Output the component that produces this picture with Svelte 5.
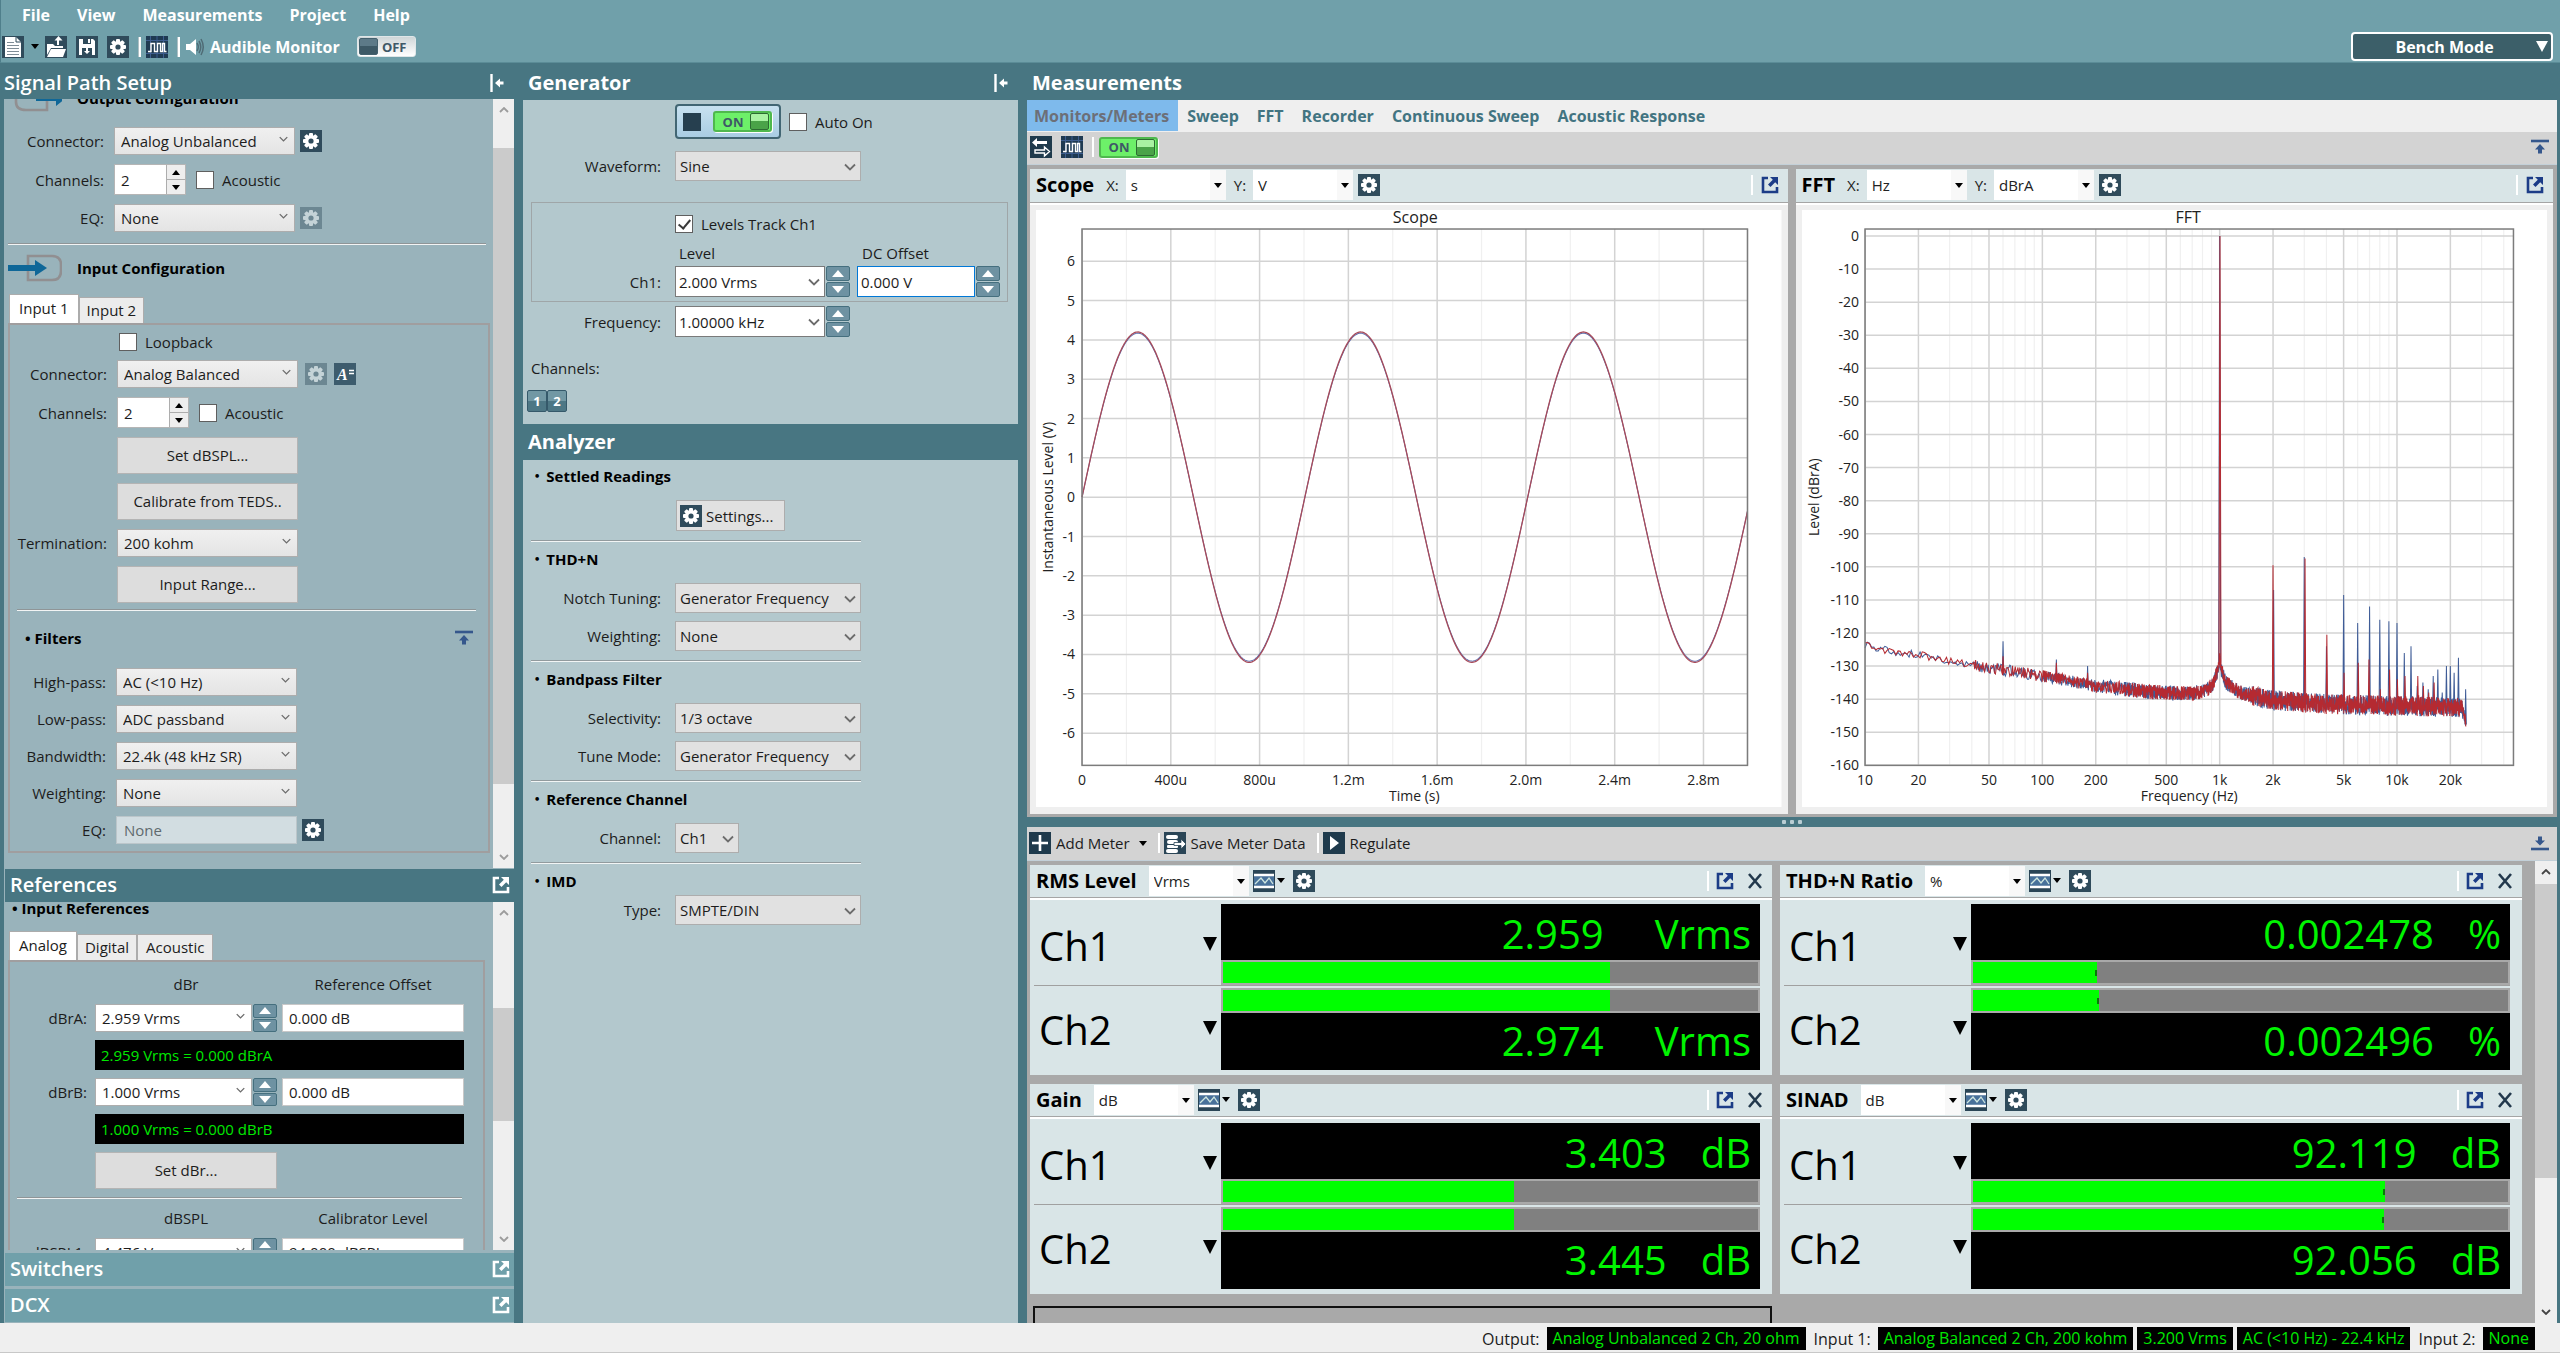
<script>
  const menus = ['File', 'View', 'Measurements', 'Project', 'Help'];
  const tabs = ['Monitors/Meters', 'Sweep', 'FFT', 'Recorder', 'Continuous Sweep', 'Acoustic Response'];

  const meters = [
    { name: 'RMS Level', unit: 'Vrms', ch1: '2.959', ch2: '2.974', bar1: 72.3, bar2: 72.3, mark: false },
    { name: 'THD+N Ratio', unit: '%', ch1: '0.002478', ch2: '0.002496', bar1: 23.2, bar2: 23.5, mark: true },
    { name: 'Gain', unit: 'dB', ch1: '3.403', ch2: '3.445', bar1: 54.3, bar2: 54.3, mark: false },
    { name: 'SINAD', unit: 'dB', ch1: '92.119', ch2: '92.056', bar1: 77, bar2: 76.8, mark: true }
  ];

  const filters = [
    ['High-pass:', 'AC (<10 Hz)'],
    ['Low-pass:', 'ADC passband'],
    ['Bandwidth:', '22.4k (48 kHz SR)'],
    ['Weighting:', 'None']
  ];

  const analyzer = [
    { title: 'THD+N', rows: [['Notch Tuning:', 'Generator Frequency'], ['Weighting:', 'None']] },
    { title: 'Bandpass Filter', rows: [['Selectivity:', '1/3 octave'], ['Tune Mode:', 'Generator Frequency']] },
    { title: 'Reference Channel', rows: [['Channel:', 'Ch1']], small: true },
    { title: 'IMD', rows: [['Type:', 'SMPTE/DIN']], tight: true }
  ];

  const status = [
    ['Output:', ['Analog Unbalanced 2 Ch, 20 ohm']],
    ['Input 1:', ['Analog Balanced 2 Ch, 200 kohm', '3.200 Vrms', 'AC (<10 Hz) - 22.4 kHz']],
    ['Input 2:', ['None']]
  ];

  // Scope plot geometry
  const S = { l: 46, r: 711, t: 19, b: 555, mid: 287, unit: 39.3, ms: 221.8 };
  const scopeX = ['0', '400u', '800u', '1.2m', '1.6m', '2.0m', '2.4m', '2.8m'];
  const scopeY = [6, 5, 4, 3, 2, 1, 0, -1, -2, -3, -4, -5, -6];
  const sine = (amp) => {
    let d = '';
    for (let x = 0; x <= 665; x += 1) {
      const y = S.mid - amp * S.unit * Math.sin((2 * Math.PI * x) / (S.ms * 1.004));
      d += (x ? 'L' : 'M') + (S.l + x) + ' ' + y.toFixed(1);
    }
    return d;
  };

  // FFT plot geometry
  const F = { l: 63, r: 711, t: 19, b: 555, zero: 26, db: 3.306, dec: 177.2 };
  const fx = (f) => F.l + F.dec * Math.log10(f / 10);
  const fy = (v) => F.zero - v * F.db;
  const fftX = [[10, '10'], [20, '20'], [50, '50'], [100, '100'], [200, '200'], [500, '500'], [1000, '1k'], [2000, '2k'], [5000, '5k'], [10000, '10k'], [20000, '20k']];
  const major = fftX.map((t) => t[0]);
  const minor = [];
  for (let d = 10; d <= 10000; d *= 10) for (let k = 2; k < 10; k++) if (!major.includes(k * d) && k * d < 45000) minor.push(k * d);

  const floorPts = [[10, -123.5], [15, -126], [20, -126.5], [30, -128.5], [50, -130.5], [100, -133], [200, -136], [400, -137.8], [700, -138.3], [850, -137.3], [930, -135], [980, -131], [1000, -128], [1020, -131], [1080, -135], [1300, -138], [2000, -140.3], [4000, -141.5], [22800, -142.5], [23300, -142.5], [24500, -147]];
  const floor = (f) => {
    for (let i = 1; i < floorPts.length; i++) {
      const [f1, v1] = floorPts[i];
      const [f0, v0] = floorPts[i - 1];
      if (f <= f1) return v0 + ((v1 - v0) * Math.log(f / f0)) / Math.log(f1 / f0);
    }
    return -147;
  };
  function noise(seed) {
    let s = seed;
    const rnd = () => ((s = (s * 16807) % 2147483647) / 2147483647) * 2 - 1;
    let d = '';
    let x = F.l;
    while (x < F.l + 600.5) {
      const f = 10 * Math.pow(10, (x - F.l) / F.dec);
      const amp = f < 40 ? 1.1 : f < 200 ? 1.8 : f < 1500 ? 2.2 : f < 23500 ? 3 : 1.5;
      d += (d ? 'L' : 'M') + x.toFixed(2) + ' ' + fy(floor(f) + rnd() * amp).toFixed(1);
      x += f < 40 ? 2.2 : f < 100 ? 0.9 : f < 300 ? 0.4 : 0.22;
    }
    return d;
  }
  const blueSpikes = [[60, -122.5], [120, -128], [180, -130], [1000, 0], [2015, -107], [3000, -97], [4000, -124], [5000, -108.5], [6000, -117], [7000, -112], [8000, -116], [9000, -116.5], [10000, -117], [11000, -126], [12000, -124], [13000, -136], [14000, -135], [15000, -137], [16000, -133], [17000, -131], [18000, -138], [19000, -130], [20000, -130], [21000, -132], [22200, -127.5], [24400, -137]];
  const redSpikes = [[60, -127], [120, -129], [180, -132], [1004, 0], [2000, -99.5], [3030, -97.5], [4020, -120.5], [5030, -132], [6050, -129], [6950, -128], [8050, -137], [9080, -131], [10050, -134], [11100, -133], [13100, -133], [14100, -136], [15100, -138], [16200, -135]];
  const spikes = (list) =>
    list.map(([f, v]) => {
      const x = fx(f);
      const w = f > 900 && f < 1100 ? 1 : 0.7;
      const base = fy(floor(f) - 1);
      return `M${(x - w).toFixed(1)} ${base.toFixed(1)}L${x.toFixed(1)} ${fy(v).toFixed(1)}L${(x + w).toFixed(1)} ${base.toFixed(1)}`;
    }).join('');
  const blueTrace = noise(4211) + spikes(blueSpikes);
  const redTrace = noise(90817) + spikes(redSpikes);
</script>

{#snippet gearIcon()}
  <svg class="ico" viewBox="0 0 22 22" aria-hidden="true">
    <rect width="22" height="22" fill="#2f4b5b" />
    <g fill="#fff">
      {#each [0, 45, 90, 135] as a}
        <rect x="9" y="3" width="4" height="16" rx="1" transform="rotate({a} 11 11)" />
      {/each}
      <circle cx="11" cy="11" r="6" />
    </g>
    <circle cx="11" cy="11" r="2.6" fill="#2f4b5b" />
  </svg>
{/snippet}

{#snippet waveIcon()}
  <svg class="ico" viewBox="0 0 22 22" aria-hidden="true">
    <rect width="22" height="22" fill="#1f3a52" />
    <path d="M0 4.5H22M0 17.500H22M4.500 0V22M17.500 0V22M11 0V22" stroke="#3d5d8f" />
    <path d="M2 15.500H5V7.500H8.500V15.500H11.500V7.500H14.500V15.500H16.500V7.500H18.500V15.500H20.500" fill="none" stroke="#fff" stroke-width="1.4" />
  </svg>
{/snippet}

{#snippet popIcon()}
  <svg class="pop" viewBox="0 0 18 18" aria-hidden="true">
    <path d="M7 2H2V16H16V11" fill="none" stroke="currentColor" stroke-width="2.600" />
    <path d="M9 1H17V9L14.200 6.200L9.500 11L7 8.500L11.800 3.800Z" fill="currentColor" />
  </svg>
{/snippet}

{#snippet collapseIcon()}
  <svg class="collapse" viewBox="0 0 14 18" aria-hidden="true">
    <path d="M1.500 0V18" stroke="#fff" stroke-width="2.400" />
    <path d="M5 9L10 4.500V7.500H13.500V10.500H10V13.500Z" fill="#fff" />
  </svg>
{/snippet}

{#snippet foldIcon(down)}
  <svg class="fold" viewBox="0 0 20 16" aria-hidden="true">
    {#if down}
      <path d="M1 14H19" stroke="#35578c" stroke-width="2.600" />
      <path d="M10 10.500L5 5.500H8V1.500H12V5.500H15Z" fill="#35578c" />
    {:else}
      <path d="M1 2H19" stroke="#35578c" stroke-width="2.600" />
      <path d="M10 5L15 10.500H12V14.500H8V10.500H5Z" fill="#35578c" />
    {/if}
  </svg>
{/snippet}

{#snippet graphIcon()}
  <svg class="ico" viewBox="0 0 22 22" aria-hidden="true">
    <rect width="22" height="22" fill="#2a4556" />
    <rect x="1" y="6" width="20" height="10" fill="#48719a" />
    <path d="M1 5H21M1 17H21" stroke="#fff" stroke-width="2.600" />
    <path d="M2 14L8 8L12 13L16 8L20 14" fill="none" stroke="#cfe6e0" stroke-width="1.300" />
  </svg>
{/snippet}

{#snippet caret()}
  <svg class="caret" viewBox="0 0 8 5" aria-hidden="true"><path d="M0 0H8L4 5Z" fill="#000" /></svg>
{/snippet}

{#snippet select(id, value, kind, label)}
  <span class="select {kind}">
    <select {id} aria-label={label}><option>{value}</option></select>
    {#if kind.includes('flat')}
      {@render caret()}
    {:else}
      <svg class="chev" viewBox="0 0 12 8" aria-hidden="true"><path d="M1 1.500L6 6.500L11 1.500" fill="none" stroke="#6c6c6c" stroke-width="1.800" /></svg>
    {/if}
  </span>
{/snippet}

{#snippet gearButton(label, disabled)}
  <button class="icon" aria-label={label} {disabled}>{@render gearIcon()}</button>
{/snippet}

{#snippet spinner(label)}
  <span class="spin">
    <button aria-label="Increase {label}"><svg viewBox="0 0 12 7"><path d="M6 0L12 7H0Z" fill="#fff" /></svg></button>
    <button aria-label="Decrease {label}"><svg viewBox="0 0 12 7"><path d="M6 7L12 0H0Z" fill="#fff" /></svg></button>
  </span>
{/snippet}

{#snippet channelCount(id)}
  <span class="count">
    <input {id} type="text" value="2" />
    <span class="steps">
      <button aria-label="More channels"><svg viewBox="0 0 8 5"><path d="M4 0L8 5H0Z" /></svg></button>
      <button aria-label="Fewer channels"><svg viewBox="0 0 8 5"><path d="M4 5L8 0H0Z" /></svg></button>
    </span>
  </span>
{/snippet}

{#snippet toggle(label)}
  <button class="toggle on" aria-label={label} aria-pressed="true"><span>ON</span><i></i></button>
{/snippet}

{#snippet scrollbar(kind)}
  <div class="scrollbar {kind}">
    <svg viewBox="0 0 10 6"><path d="M1 5L5 1L9 5" fill="none" stroke="currentColor" stroke-width="1.800" /></svg>
    <div class="track"><div class="thumb"></div></div>
    <svg viewBox="0 0 10 6"><path d="M1 1L5 5L9 1" fill="none" stroke="currentColor" stroke-width="1.800" /></svg>
  </div>
{/snippet}

<div class="app">
  <header>
    <nav>
      {#each menus as m}<button>{m}</button>{/each}
    </nav>
    <div class="toolbar">
      <button class="icon" aria-label="New project">
        <svg class="ico" viewBox="0 0 22 22"><rect width="22" height="22" fill="#2f4b5b" /><path d="M3 1H14L19 6V21H3Z" fill="#fff" /><path d="M14 1V6H19" fill="none" stroke="#2f4b5b" /><path d="M5 6.500H12M5 9.500H17M5 12.500H17M5 15.500H17M5 18.500H17" stroke="#7f8d96" /></svg>
      </button>
      <button class="drop" aria-label="New project options">{@render caret()}</button>
      <button class="icon" aria-label="Open">
        <svg class="ico" viewBox="0 0 22 22"><rect width="22" height="22" fill="#2f4b5b" /><path d="M2 8H8L10 10H18V12H6L2 19Z" fill="#fff" /><path d="M6 13H21L18 21H2Z" fill="#fff" /><path d="M13 9V3" stroke="#fff" stroke-width="2" /><path d="M9.500 4.500L13.500 0L17.500 4.500Z" fill="#fff" /></svg>
      </button>
      <button class="icon" aria-label="Save">
        <svg class="ico" viewBox="0 0 22 22"><rect width="22" height="22" fill="#2f4b5b" /><path d="M3 3H17L19 5V19H3Z" fill="#fff" /><path d="M7 3H15V8H7ZM6 12H16V19H6Z" fill="#2f4b5b" /><path d="M12 3H14V7H12Z" fill="#fff" /><path d="M10 12H12V15H14L11 18L8 15H10Z" fill="#fff" /></svg>
      </button>
      {@render gearButton('Project settings', false)}
      <span class="bar"></span>
      <button class="icon" aria-label="Signal generator">{@render waveIcon()}</button>
      <span class="bar"></span>
      <svg class="speaker" viewBox="0 0 20 20" aria-hidden="true"><path d="M1 7H5L11 2V18L5 13H1Z" fill="#fff" /><path d="M12 6Q14.500 10 12 14M14 4Q17.500 10 14 16M16 2Q20.500 10 16 18" fill="none" stroke="#4f6b75" stroke-width="1.500" /></svg>
      <span class="monitor">Audible Monitor</span>
      <button class="toggle off" aria-label="Audible Monitor" aria-pressed="false"><i></i><span>OFF</span></button>
      <button class="mode"><span>Bench Mode</span><svg viewBox="0 0 12 12" aria-hidden="true"><path d="M0 0H12L6 11Z" fill="#fff" /></svg></button>
    </div>
  </header>

  <main>
    <aside class="left">
      <h2 class="head">Signal Path Setup <button class="plain" aria-label="Collapse">{@render collapseIcon()}</button></h2>
      <div class="pane grow">
        <div class="scroll signal">
          <h3 class="conf">
            <svg viewBox="0 0 54 28" aria-hidden="true"><path d="M8 2H39V26H18Q8 26 8 18Z" fill="none" stroke="#918f91" stroke-width="2.600" /><path d="M28 11H48V6L58 14L48 22V17H28Z" fill="#0f6798" /></svg>
            Output Configuration
          </h3>
          <div class="form out">
            <label for="oc">Connector:</label>
            <div>{@render select('oc', 'Analog Unbalanced', 'grey')}{@render gearButton('Output settings', false)}</div>
            <label for="och">Channels:</label>
            <div>{@render channelCount('och')}<label class="check"><input type="checkbox" />Acoustic</label></div>
            <label for="oeq">EQ:</label>
            <div>{@render select('oeq', 'None', 'grey')}{@render gearButton('Output EQ settings', true)}</div>
          </div>
          <hr />
          <h3 class="conf">
            <svg viewBox="0 0 54 28" aria-hidden="true"><path d="M20 2H44Q53 2 53 11V17Q53 26 44 26H20Z" fill="none" stroke="#918f91" stroke-width="2.600" /><path d="M0 11H27V6L39 14L27 22V17H0Z" fill="#0f6798" /></svg>
            Input Configuration
          </h3>
          <div class="tabs"><button class="active">Input 1</button><button>Input 2</button></div>
          <div class="box">
            <div class="form">
              <span></span>
              <div class="short"><label class="check"><input type="checkbox" />Loopback</label></div>
              <label for="ic">Connector:</label>
              <div class="sensor">
                {@render select('ic', 'Analog Balanced', 'grey')}
                {@render gearButton('Input settings', true)}
                <button class="icon" aria-label="Sensor units">
                  <svg class="ico" viewBox="0 0 22 22"><rect width="22" height="22" fill="#3d5c6d" /><text x="3" y="17" class="aicon">A</text><path d="M15 7.500H20M15 10.500H20" stroke="#fff" stroke-width="1.300" /></svg>
                </button>
              </div>
              <label for="ich">Channels:</label>
              <div>{@render channelCount('ich')}<label class="check"><input type="checkbox" />Acoustic</label></div>
              <span></span><div><button class="push">Set dBSPL...</button></div>
              <span></span><div><button class="push">Calibrate from TEDS..</button></div>
              <label for="term">Termination:</label><div>{@render select('term', '200 kohm', 'grey')}</div>
              <span></span><div><button class="push">Input Range...</button></div>
            </div>
            <hr />
            <div class="filterhead"><h3>• Filters</h3><button class="plain" aria-label="Collapse filters">{@render foldIcon(false)}</button></div>
            <div class="form filt">
              {#each filters as [l, v], i}
                <label for="flt{i}">{l}</label><div>{@render select('flt' + i, v, 'grey')}</div>
              {/each}
              <label for="feq">EQ:</label>
              <div><input id="feq" class="readonly" type="text" value="None" readonly />{@render gearButton('Filter EQ settings', false)}</div>
            </div>
          </div>
        </div>
        {@render scrollbar('one')}
      </div>
      <h2 class="head sub">References <button class="plain" aria-label="Undock">{@render popIcon()}</button></h2>
      <div class="pane refs">
        <div class="scroll reflist">
          <h3>• Input References</h3>
          <div class="tabs"><button class="active">Analog</button><button>Digital</button><button>Acoustic</button></div>
          <div class="box">
            <div class="refgrid">
              <span></span><span class="cap">dBr</span><span class="cap">Reference Offset</span>
              <label for="ra">dBrA:</label>
              <div>{@render select('ra', '2.959 Vrms', 'white')}{@render spinner('dBrA')}</div>
              <input type="text" value="0.000 dB" aria-label="dBrA offset" />
              <output>2.959 Vrms = 0.000 dBrA</output>
              <label for="rb">dBrB:</label>
              <div>{@render select('rb', '1.000 Vrms', 'white')}{@render spinner('dBrB')}</div>
              <input type="text" value="0.000 dB" aria-label="dBrB offset" />
              <output>1.000 Vrms = 0.000 dBrB</output>
              <span></span><button class="push">Set dBr...</button>
            </div>
            <hr />
            <div class="refgrid">
              <span></span><span class="cap">dBSPL</span><span class="cap">Calibrator Level</span>
              <label for="rs">dBSPL1:</label>
              <div>{@render select('rs', '4.476 Vrms', 'white')}{@render spinner('dBSPL1')}</div>
              <input type="text" value="94.000 dBSPL" aria-label="Calibrator level" />
            </div>
          </div>
        </div>
        {@render scrollbar('two')}
      </div>
      <h2 class="head sub closed">Switchers <button class="plain" aria-label="Undock">{@render popIcon()}</button></h2>
      <h2 class="head sub closed">DCX <button class="plain" aria-label="Undock">{@render popIcon()}</button></h2>
    </aside>

    <section class="mid">
      <h2 class="head">Generator <button class="plain" aria-label="Collapse">{@render collapseIcon()}</button></h2>
      <div class="panel gen">
        <div class="line first">
          <span class="lab"></span>
          <span class="power"><i class="stop"></i>{@render toggle('Generator')}</span>
          <label class="check"><input type="checkbox" />Auto On</label>
        </div>
        <div class="line wave"><label class="lab" for="wf">Waveform:</label>{@render select('wf', 'Sine', 'tall')}</div>
        <div class="group">
          <div class="line"><span class="lab"></span><label class="check"><input type="checkbox" checked />Levels Track Ch1</label></div>
          <div class="line caps"><span class="lab"></span><span class="c1">Level</span><span>DC Offset</span></div>
          <div class="line">
            <label class="lab" for="lv">Ch1:</label>{@render select('lv', '2.000 Vrms', 'tall white')}{@render spinner('level')}
            <input class="dc" type="text" value="0.000 V" aria-label="DC Offset" />{@render spinner('DC offset')}
          </div>
        </div>
        <div class="line freq"><label class="lab" for="fq">Frequency:</label>{@render select('fq', '1.00000 kHz', 'tall white')}{@render spinner('frequency')}</div>
        <p>Channels:</p>
        <div class="chans"><button>1</button><button>2</button></div>
      </div>
      <h2 class="head second-head">Analyzer</h2>
      <div class="panel ana">
        <section>
          <h3><b>•</b>Settled Readings</h3>
          <div class="line"><span class="lab"></span><button class="settings">{@render gearIcon()}Settings...</button></div>
        </section>
        {#each analyzer as s, i}
          <section class:tight={s.tight}>
            <h3><b>•</b>{s.title}</h3>
            {#each s.rows as [l, v], j}
              <div class="line"><label class="lab" for="an{i}{j}">{l}</label>{@render select(`an${i}${j}`, v, s.small ? 'tall small' : 'tall')}</div>
            {/each}
          </section>
        {/each}
      </div>
    </section>

    <section class="right">
      <h2 class="head">Measurements</h2>
      <nav class="mtabs">
        {#each tabs as t, i}<button class:active={i === 0}>{t}</button>{/each}
      </nav>
      <div class="mbar">
        <button class="icon" aria-label="Swap">
          <svg class="ico" viewBox="0 0 22 22"><rect width="22" height="22" fill="#1f3a4c" /><path d="M2 6.500L7 2V5H17V8H7V11Z" fill="#fff" /><path d="M19.500 15.500L14.500 11V14H5V17H14.500V20Z" fill="none" stroke="#fff" stroke-width="1.400" /></svg>
        </button>
        <button class="icon" aria-label="Monitors">{@render waveIcon()}</button>
        <span class="bar"></span>
        {@render toggle('Monitors')}
        <button class="plain end" aria-label="Collapse monitors">{@render foldIcon(false)}</button>
      </div>

      <div class="charts">
        <article>
          <div class="ahead">
            <h3>Scope</h3>
            <label for="sx">X:</label>{@render select('sx', 's', 'flat')}
            <label for="sy">Y:</label>{@render select('sy', 'V', 'flat')}
            {@render gearButton('Scope settings', false)}
            <span class="bar push-right"></span><button class="plain" aria-label="Undock scope">{@render popIcon()}</button>
          </div>
          <div class="plot">
            <svg viewBox="0 0 745 597" role="img" aria-label="Scope">
              <rect width="745" height="597" fill="#fff" />
              <text x="379" y="13" class="t title">Scope</text>
              {#each scopeX as l, i}
                <path d="M{S.l + i * 0.4 * S.ms} {S.t}V{S.b}" class="maj" />
                <path d="M{S.l + (i * 0.4 + 0.2) * S.ms} {S.t}V{S.b}" class="min" />
                <text x={S.l + i * 0.4 * S.ms} y="575" class="t">{l}</text>
              {/each}
              {#each scopeY as v}
                <path d="M{S.l} {S.mid - v * S.unit}H{S.r}" class="maj" />
                <text x="39" y={S.mid - v * S.unit + 5} class="t e">{v}</text>
              {/each}
              <path d={sine(4.17)} class="tr blue" />
              <path d={sine(4.2)} class="tr rose" />
              <rect x={S.l} y={S.t} width={S.r - S.l} height={S.b - S.t} class="frame" />
              <text x="378" y="591" class="t">Time (s)</text>
              <text class="t" transform="translate(17 287) rotate(-90)">Instantaneous Level (V)</text>
            </svg>
          </div>
        </article>
        <article>
          <div class="ahead">
            <h3>FFT</h3>
            <label for="fxs">X:</label>{@render select('fxs', 'Hz', 'flat')}
            <label for="fys">Y:</label>{@render select('fys', 'dBrA', 'flat')}
            {@render gearButton('FFT settings', false)}
            <span class="bar push-right"></span><button class="plain" aria-label="Undock FFT">{@render popIcon()}</button>
          </div>
          <div class="plot">
            <svg viewBox="0 0 745 597" role="img" aria-label="FFT">
              <rect width="745" height="597" fill="#fff" />
              <text x="386" y="13" class="t title">FFT</text>
              {#each minor as f}<path d="M{fx(f)} {F.t}V{F.b}" class="min" />{/each}
              {#each fftX as [f, l]}
                <path d="M{fx(f)} {F.t}V{F.b}" class="maj" />
                <text x={fx(f)} y="575" class="t">{l}</text>
              {/each}
              {#each Array(17) as _, i}
                <path d="M{F.l} {fy(-10 * i)}H{F.r}" class="maj" />
                <text x="57" y={fy(-10 * i) + 5} class="t e">{i ? -10 * i : 0}</text>
              {/each}
              <path d={blueTrace} class="tr navy" />
              <path d={redTrace} class="tr red" />
              <rect x={F.l} y={F.t} width={F.r - F.l} height={F.b - F.t} class="frame" />
              <text x="387" y="591" class="t">Frequency (Hz)</text>
              <text class="t" transform="translate(17 287) rotate(-90)">Level (dBrA)</text>
            </svg>
          </div>
        </article>
      </div>
      <div class="splitter"><i></i><i></i><i></i></div>

      <div class="mbar second">
        <button class="tool"><svg class="ico" viewBox="0 0 22 22"><rect width="22" height="22" fill="#1f3a4c" /><path d="M11 3V19M3 11H19" stroke="#fff" stroke-width="2.600" /></svg>Add Meter{@render caret()}</button>
        <span class="bar"></span>
        <button class="tool"><svg class="ico" viewBox="0 0 22 22"><rect width="22" height="22" fill="#2a4556" /><g fill="#fff"><rect x="2" y="3" width="12" height="4" rx="2" /><rect x="3" y="8" width="11" height="4" rx="2" /><rect x="3" y="13" width="11" height="3" rx="1" /><rect x="2" y="17" width="12" height="4" rx="2" /><path d="M10 10.500H17V7L22 12L17 17V13.500H10Z" stroke="#2a4556" stroke-width=".8" /></g></svg>Save Meter Data</button>
        <span class="bar"></span>
        <button class="tool"><svg class="ico" viewBox="0 0 22 22"><rect width="22" height="22" fill="#1f3a4c" /><path d="M7 4L16 11L7 18Z" fill="#fff" /></svg>Regulate</button>
        <button class="plain end" aria-label="Collapse meters">{@render foldIcon(true)}</button>
      </div>

      <div class="meterwrap">
        <div class="meters">
          {#each meters as m}
            <article>
              <div class="ahead">
                <h3>{m.name}</h3>
                {@render select(undefined, m.unit, 'flat', m.name + ' unit')}
                <button class="graph" aria-label="Graph">{@render graphIcon()}{@render caret()}</button>
                {@render gearButton(m.name + ' settings', false)}
                <span class="bar push-right"></span>
                <button class="plain" aria-label="Undock">{@render popIcon()}</button>
                <button class="plain" aria-label="Close"><svg class="x" viewBox="0 0 16 16"><path d="M2 1L14 15M14 1L2 15" stroke="#22384c" stroke-width="2.600" /></svg></button>
              </div>
              <div class="ch">
                <button class="name">Ch1<svg viewBox="0 0 14 14"><path d="M0 0H14L7 14Z" /></svg></button>
                <div class="read">
                  <p class:wide={m.unit === 'Vrms'}><span>{m.ch1}</span><span>{m.unit}</span></p>
                  <div class="level"><div class:mark={m.mark} style:width="{m.bar1}%"></div></div>
                </div>
              </div>
              <div class="ch two">
                <button class="name">Ch2<svg viewBox="0 0 14 14"><path d="M0 0H14L7 14Z" /></svg></button>
                <div class="read">
                  <div class="level"><div class:mark={m.mark} style:width="{m.bar2}%"></div></div>
                  <p class:wide={m.unit === 'Vrms'}><span>{m.ch2}</span><span>{m.unit}</span></p>
                </div>
              </div>
            </article>
          {/each}
          <div class="empty"></div>
        </div>
        {@render scrollbar('three')}
      </div>
    </section>
  </main>

  <footer>
    {#each status as [l, chips]}
      <span class="sl">{l}</span>
      {#each chips as c}<span class="chip">{c}</span>{/each}
    {/each}
  </footer>
</div>

<style>
  :global(body) { overflow: hidden; }
  .app, .app :global(*) { box-sizing: border-box; }
  .app {
    height: 100vh; display: flex; flex-direction: column; background: #487682; color: #1c1c1c;
    font: 15px/20px "Open Sans", "Noto Sans", sans-serif;
  }
  button, input, select { font: inherit; color: inherit; margin: 0; border-radius: 0; }
  button { background: none; border: 0; padding: 0; }
  h2, h3, p { margin: 0; }
  svg { display: block; flex: none; }
  hr { width: 100%; margin: 0; border: 0; border-top: 1px solid #8f9597; border-bottom: 1px solid #f2f4f4; height: 2px; }
  .ico { width: 22px; height: 22px; }
  .icon:disabled { opacity: .42; }
  .caret { width: 8px; height: 5px; }
  .bar { width: 3px; height: 20px; background: #fff; border-left: 1px solid #aebfc4; }

  header { height: 63px; flex: none; background: #70a0aa; border-left: 1px solid #4f7f8b; color: #fff; font-weight: 700; font-size: 16px; border-bottom: 1px solid #5b8c97; }
  nav { display: flex; }
  header nav { height: 29px; padding-left: 21px; gap: 27px; align-items: center; }
  .toolbar { display: flex; align-items: center; height: 33px; padding: 2px 7px 0 1px; gap: 9px; }
  .toolbar .drop { margin: 0 -3px 0 -2px; }
  .toolbar .bar { margin-right: -4px; }
  .speaker { width: 20px; height: 20px; margin: 0 -4px 0 0; }
  .monitor { margin-right: 8px; }
  .mode {
    margin-left: auto; width: 202px; height: 29px; border: 2px solid #fff; border-radius: 4px; background: #3c5f69;
    display: flex; align-items: center; padding: 0 3px 0 0;
  }
  .mode span { flex: 1; }
  .mode svg { width: 12px; height: 12px; }
  .toggle { height: 21px; width: 59px; display: flex; align-items: center; border-radius: 3px; font-weight: 700; font-size: 13px; line-height: 16px; color: #3e5867; }
  .toggle span { flex: 1; text-align: center; }
  .toggle i { width: 19px; height: 17px; border-radius: 2px; border: 1px solid #2d6b32; }
  .toggle.on { background: #6df069; border: 2px solid #4fb84e; padding: 0 1px; box-shadow: 1px 1px 0 #fff; }
  .toggle.on i { background: linear-gradient(#a9f2a2 45%, #4aa348 50%); }
  .toggle.off { background: linear-gradient(#cfd6d8, #fff); padding: 0 4px 0 1px; border: 1px solid #dfe6e8; }
  .toggle.off i { background: linear-gradient(#5d7a88 50%, #3d5966 50%); border-color: #45616e; }

  main { flex: 1; min-height: 0; display: grid; grid-template-columns: 510px 495px minmax(0, 1fr); gap: 9px; padding: 0 3px 0 4px; }
  .head {
    height: 36px; flex: none; display: flex; align-items: center; justify-content: space-between; color: #fff;
    font-size: 20px; line-height: 24px; font-weight: 600; padding-top: 3px;
  }
  .left, .mid, .right { display: flex; flex-direction: column; min-height: 0; min-width: 0; }
  .mid .head, .right .head { padding-left: 5px; font-weight: 700; height: 37px; }
  .mid .second-head { height: 36px; padding-top: 0; }
  .collapse { width: 14px; height: 18px; margin-right: 10px; }
  .pop { width: 18px; height: 18px; }
  .left .sub { background: #487682; height: 33px; padding: 0 4px 2px 5px; margin-left: 1px; }
  .left .closed { background: #70a0aa; margin-bottom: 3px; }
  .left .closed:last-child { margin-bottom: 1px; }
  .left { background: linear-gradient(#487682 36px, #99b3bb 36px); }
  .pane { display: flex; min-height: 0; background: #99b3bb; margin-bottom: 1px; }
  .grow { flex: 1; }
  .refs { height: 348px; flex: none; margin-bottom: 3px; }
  .scroll { flex: 1; min-width: 0; overflow: hidden; padding-left: 4px; }
  .signal hr { width: 478px; }
  .scrollbar { width: 21px; flex: none; background: #efefef; color: #9c9c9c; display: flex; flex-direction: column; align-items: center; padding: 8px 0; }
  .scrollbar svg { width: 10px; height: 6px; }
  .track { flex: 1; align-self: stretch; margin: 4px 0; display: flex; flex-direction: column; }
  .thumb { background: #cbcbcb; }
  .one .thumb { margin-top: 31px; height: 636px; }
  .two .thumb { margin-top: 88px; height: 113px; }

  h3 { font-size: 15px; line-height: 24px; font-weight: 700; color: #000; }
  .conf { display: flex; align-items: center; gap: 15px; height: 28px; margin-top: 9px; }
  .signal .conf:first-child { margin-top: -15px; }
  .conf svg { width: 54px; height: 28px; }
  .form { display: grid; grid-template-columns: 97px 1fr; gap: 9px 10px; align-items: center; }
  .form > label { text-align: right; }
  .form > div { display: flex; align-items: center; gap: 5px; }
  .form .sensor { gap: 7px; }
  .out { margin: 15px 0 11px -1px; }
  .filt { margin-left: -1px; }
  .form .short { height: 18px; padding-left: 2px; }
  .check { display: flex; align-items: center; gap: 8px; }
  .count + .check { margin-left: 5px; }
  input[type='checkbox'] { appearance: none; width: 18px; height: 18px; background: #fff; border: 1px solid #5f5f5f; display: grid; place-items: center; }
  input[type='checkbox']:checked::after { content: ''; width: 5px; height: 10px; border: solid #3a3a3a; border-width: 0 2px 2px 0; rotate: 40deg; margin-top: -3px; }
  .select { position: relative; display: inline-flex; width: 181px; height: 28px; }
  .select select { appearance: none; width: 100%; height: 100%; border: 1px solid #adadad; background: linear-gradient(#f0f0f0, #e4e4e4); padding: 0 24px 0 6px; outline: 0; }
  .chev { position: absolute; right: 7px; top: 9px; width: 9px; height: 6px; pointer-events: none; }
  .select.white select { background: #fff; }
  .tall { width: 186px; height: 30px; }
  .tall select { background: #e1e1e1; padding-left: 4px; }
  .tall .chev { right: 5px; top: 12px; width: 12px; height: 8px; }
  .tall.white { width: 150px; height: 31px; }
  .tall.white select { border-color: #7a7a7a; padding-left: 3px; }
  .tall.small { width: 64px; }
  .flat { width: 100px; height: 30px; }
  .flat select { background: linear-gradient(90deg, #fff 84px, #f8f8f8 84px); border: 0; padding-left: 5px; }
  .flat .caret { position: absolute; right: 4px; top: 13px; pointer-events: none; }
  .count { display: flex; width: 72px; height: 31px; border: 1px solid #b5b5b5; background: #fff; }
  .count input { width: 51px; border: 0; padding: 0 6px; background: none; }
  .steps { flex: 1; display: grid; gap: 1px; background: #adadad; border-left: 1px solid #adadad; }
  .steps button { background: #eee; display: grid; place-items: center; }
  .steps svg { width: 8px; height: 5px; }
  .push { width: 181px; height: 37px; background: #ddd; border: 1px solid #b4b4b4; padding-bottom: 1px; }
  .tabs { display: flex; align-items: flex-end; margin: 12px 0 0 1px; }
  .tabs button { height: 26px; padding: 0 7px 2px; background: #ececec; border: 1px solid #acacac; border-bottom: 0; }
  .tabs .active { height: 29px; background: #fff; padding: 0 9px 2px; }
  .box { border: 2px solid #a09e9f; width: 482px; padding: 8px 0 7px; }
  .box hr { margin: 6px 0 15px 7px; width: 459px; }
  .filterhead { display: flex; justify-content: space-between; align-items: center; padding: 0 14px 0 15px; margin-bottom: 18px; }
  .fold { width: 20px; height: 16px; }
  .readonly { width: 181px; height: 28px; background: #d2dde1; border: 1px solid #bcc6ca; padding: 0 7px; color: #5f6a6e; }
  .aicon { font: italic bold 16px/1 "Liberation Serif", serif; fill: #fff; }

  .reflist h3 { margin-top: -6px; padding-left: 4px; }
  .reflist .tabs { margin-top: 11px; }
  .reflist .tabs button + button + button { padding: 0 8px 2px; }
  .reflist .box { width: 477px; padding-top: 10px; }
  .refgrid { display: grid; grid-template-columns: 80px 182px 182px; gap: 8px 5px; }
  .refgrid > label { text-align: right; padding-right: 3px; line-height: 28px; }
  .refgrid > div { display: flex; gap: 1px; height: 28px; }
  .refgrid .select { width: 157px; }
  .refgrid > input { height: 28px; border: 1px solid #c8c8c8; padding: 0 6px; background: #fff; width: 182px; }
  .refgrid output { grid-column: 2 / 4; height: 30px; line-height: 31px; padding-left: 6px; background: #000; color: #00e800; }
  .refgrid .cap { text-align: center; line-height: 24px; }
  .refgrid .push { width: 182px; }
  .reflist .box hr { width: 445px; margin: 8px 0 7px 7px; }
  .spin { width: 24px; height: 28px; display: grid; gap: 1px; }
  .spin button { background: #6e92a2; border: 1px solid #456f7e; border-radius: 2px; display: grid; place-items: center; }
  .spin svg { width: 12px; height: 7px; }

  .panel { background: #b3c8cd; padding-left: 8px; }
  .gen { height: 324px; flex: none; padding-top: 4px; padding-right: 10px; }
  .ana { flex: 1; min-height: 0; padding-top: 4px; overflow: hidden; }
  .line { display: flex; align-items: center; }
  .lab { width: 144px; padding-right: 14px; text-align: right; flex: none; }
  .line.first { height: 35px; }
  .first .check { margin-left: 8px; }
  .power { display: flex; align-items: center; gap: 12px; width: 106px; height: 35px; padding-left: 6px; background: linear-gradient(#c8e1f0, #a9cde3); border: 2px solid #426673; border-radius: 4px; }
  .stop { width: 18px; height: 18px; background: #263f4f; }
  .line.wave { margin: 11px 0 21px; height: 31px; }
  .group { border: 1px solid #9fa6a8; padding: 10px 0 4px; }
  .group .lab { width: 143px; }
  .group .check { height: 22px; }
  .line.caps { height: 20px; margin: 8px 0 3px; }
  .caps .c1 { width: 183px; padding-left: 4px; }
  .caps span:last-child { padding-left: 4px; }
  .gen .spin { height: 31px; margin-left: 1px; }
  .dc { width: 118px; height: 31px; border: 1px solid #0078d7; background: #fff; padding: 0 3px; margin-left: 7px; }
  .line.freq { margin-top: 4px; }
  .gen p { margin: 21px 0 12px; }
  .chans { display: flex; margin-left: -4px; }
  .chans button { width: 20px; height: 22px; border: 1px solid #35596a; border-radius: 2px; background: linear-gradient(#7298a4 50%, #4d7785 50%); color: #fff; font-weight: 700; font-size: 13px; line-height: 18px; }
  .ana section { width: 330px; padding-bottom: 10px; border-bottom: 1px solid #f2f5f5; box-shadow: inset 0 -1px #929b9e; margin-bottom: 5px; }
  .ana section:last-child { border: 0; box-shadow: none; }
  .ana h3 { display: flex; align-items: center; gap: 7px; height: 24px; margin-bottom: 12px; padding-left: 4px; }
  .ana h3 b { font-size: 11px; }
  .ana .line + .line { margin-top: 8px; }
  .ana .tight h3 { margin-bottom: 2px; }
  .settings { margin-left: 1px; display: flex; align-items: center; gap: 4px; width: 109px; height: 31px; padding-left: 3px; border: 1px solid #adadad; background: #e1e1e1; }

  .mtabs { background: #efefef; height: 32px; flex: none; align-items: flex-start; }
  .mtabs button { height: 31px; padding: 0 9px; font-weight: 700; font-size: 16px; color: #427481; }
  .mtabs .active { background: #7ebaec; color: #6c6f78; padding: 0 9px 0 7px; }
  .mbar { height: 33px; flex: none; background: #d3d3d3; border-bottom: 1px solid #c3d0d8; display: flex; align-items: center; gap: 9px; padding: 0 7px 2px 3px; }
  .mbar .bar { width: 2px; border: 0; }
  .mbar .toggle { margin-left: -4px; }
  .plain.end { margin-left: auto; }
  .charts { background: #a9a9a9; display: grid; grid-template-columns: 1fr 1fr; gap: 8px; padding: 4px 4px 3px 3px; flex: none; }
  article { background: #efefef; min-width: 0; }
  .ahead { height: 36px; background: #d9e5e7; border-bottom: 2px solid #fff; box-shadow: inset 0 -1px #a5a5a5; display: flex; align-items: center; gap: 4px; padding: 0 9px 2px 6px; color: #1c3c87; }
  .ahead h3 { font-size: 20px; margin-right: 4px; }
  .ahead label { color: #222; margin: 0 3px 0 4px; }
  .ahead .bar { width: 2px; border: 0; margin-right: 4px; }
  .ahead .push-right { margin-left: auto; }
  .ahead .select { color: #222; }
  .ahead .icon { margin-left: 1px; }
  .plot { padding: 5px 6px 7px; }
  .plot svg { width: 100%; height: auto; }
  .t { font-size: 14px; text-anchor: middle; fill: #222; }
  .t.title { font-size: 16px; }
  .t.e { text-anchor: end; }
  .maj { stroke: #d3d3d3; stroke-width: 1.500; }
  .min { stroke: #f0f0f0; stroke-width: 1.200; }
  .frame { fill: none; stroke: #7c7c7c; stroke-width: 1.500; }
  .tr { fill: none; stroke-width: 1; }
  .blue { stroke: #5a6eae; }
  .rose { stroke: #a84b5a; stroke-width: 1.300; }
  .navy { stroke: #3f5c97; }
  .red { stroke: #b52a31; }
  .splitter { height: 10px; flex: none; display: flex; gap: 4px; align-items: center; justify-content: center; }
  .splitter i { width: 4px; height: 4px; background: #b9cdd3; border-radius: 1px; }

  .second { height: 34px; padding-left: 2px; }
  .tool { display: flex; align-items: center; gap: 5px; }
  .tool .caret { margin: 2px 0 0 4px; }
  .second .bar { margin: 0 -5px 0 2px; }
  .meterwrap { flex: 1; min-height: 0; display: flex; background: #a9a9a9; }
  .meters { flex: 1; min-width: 0; overflow: hidden; display: grid; grid-template-columns: 1fr 1fr; gap: 9px 8px; padding: 4px 13px 0 3px; align-content: start; }
  .meters article { background: #d9e5e7; height: 210px; }
  .meters .ahead { gap: 8px; padding-right: 9px; height: 35px; }
  .meters .ahead h3 { margin-right: 4px; }
  .meters .ahead .select { margin-right: -4px; }
  .meters .ahead .icon { margin-left: 0; }
  .meters .ahead .bar { margin-right: -1px; }
  .x { width: 16px; height: 16px; margin: 0 0 0 5px; }
  .graph { display: flex; align-items: center; gap: 2px; }
  .ch { display: flex; margin: 4px 12px 0 4px; height: 82px; border-bottom: 1px solid #a0a0a0; }
  .ch.two { margin-top: 2px; border: 0; }
  .name { width: 187px; flex: none; padding: 2px 4px 0 5px; display: flex; align-items: center; justify-content: space-between; font-size: 40px; line-height: 50px; color: #000; }
  .name svg { width: 14px; height: 14px; margin-top: -4px; }
  .read { flex: 1; display: flex; flex-direction: column; background: #000; }
  .read p { flex: 1; display: flex; align-items: center; justify-content: flex-end; gap: 34px; padding: 3px 9px 0 0; color: #00f400; font-size: 40px; line-height: 50px; }
  .read p.wide { gap: 51px; }
  .two .read p { padding: 0 9px 2px 0; }
  .level { height: 25px; flex: none; border: 2px solid #a9a9a9; background: #808080; }
  .level div { height: 100%; background: #0f0; display: flex; align-items: center; justify-content: flex-end; }
  .level .mark::after { content: ''; width: 2px; height: 6px; background: #087a08; }
  .empty { height: 40px; margin: 3px 0 0 3px; border: 2px solid #111; }
  .three { width: 22px; color: #444; }
  .three .track { margin-top: 9px; }
  .three .thumb { height: 294px; }

  footer { height: 30px; flex: none; background: #efefef; border-bottom: 1px solid #c8c8c8; display: flex; align-items: center; justify-content: flex-end; gap: 4px; padding: 2px 25px 0 0; font-size: 16px; }
  .sl { margin: 0 3px 0 4px; }
  .chip { height: 23px; line-height: 22px; background: #000; color: #00e800; padding: 0 6px; }
</style>
